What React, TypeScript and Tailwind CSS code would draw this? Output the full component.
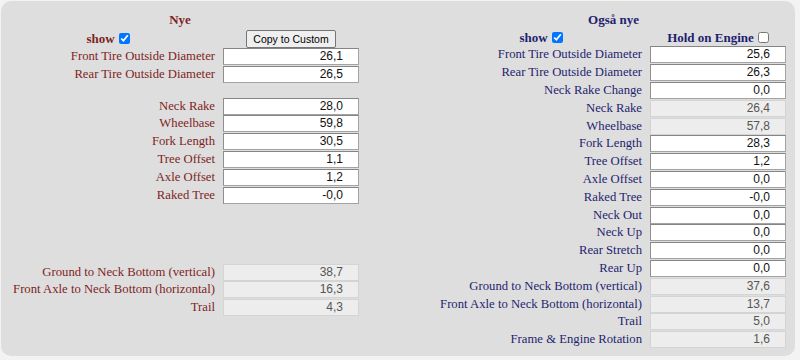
import React from "react";

type Row = { label: string; value: string; disabled?: boolean } | { gap: number };

const serif = { fontFamily: '"Liberation Serif", "Times New Roman", serif' };
const sans = { fontFamily: '"Liberation Sans", Arial, sans-serif' };

function Field({ value, disabled }: { value: string; disabled?: boolean }) {
  return (
    <div
      className={
        disabled
          ? "w-[136px] h-[17px] bg-[#ededed] border border-[#d4d4d4] text-[#555] text-[12px] leading-[15px] text-right pr-[15px]"
          : "w-[136px] h-[17px] bg-white border border-[#a3a3a3] border-t-[#858585] border-l-[#8f8f8f] text-[#111] text-[12px] leading-[15px] text-right pr-[15px]"
      }
      style={sans}
    >
      {value}
    </div>
  );
}

function Rows({ rows, labelW, color }: { rows: Row[]; labelW: string; color: string }) {
  return (
    <>
      {rows.map((r, i) =>
        "gap" in r ? (
          <div key={i} style={{ height: r.gap }} />
        ) : (
          <div key={i} className="flex items-center h-[17.8px] gap-[8px]">
            <div className={`${labelW} text-right text-[12.7px] leading-[15px] whitespace-nowrap ${color}`} style={serif}>
              {r.label}
            </div>
            <Field value={r.value} disabled={r.disabled} />
          </div>
        )
      )}
    </>
  );
}

function Check({ checked }: { checked?: boolean }) {
  return (
    <input
      type="checkbox"
      defaultChecked={checked}
      className="w-[11px] h-[11px] m-0 ml-[4px] align-middle"
    />
  );
}

export default function App() {
  const left: Row[] = [
    { label: "Front Tire Outside Diameter", value: "26,1" },
    { label: "Rear Tire Outside Diameter", value: "26,5" },
    { gap: 13.7 },
    { label: "Neck Rake", value: "28,0" },
    { label: "Wheelbase", value: "59,8" },
    { label: "Fork Length", value: "30,5" },
    { label: "Tree Offset", value: "1,1" },
    { label: "Axle Offset", value: "1,2" },
    { label: "Raked Tree", value: "-0,0" },
    { gap: 59.2 },
    { label: "Ground to Neck Bottom (vertical)", value: "38,7", disabled: true },
    { label: "Front Axle to Neck Bottom (horizontal)", value: "16,3", disabled: true },
    { label: "Trail", value: "4,3", disabled: true },
  ];
  const right: Row[] = [
    { label: "Front Tire Outside Diameter", value: "25,6" },
    { label: "Rear Tire Outside Diameter", value: "26,3" },
    { label: "Neck Rake Change", value: "0,0" },
    { label: "Neck Rake", value: "26,4", disabled: true },
    { label: "Wheelbase", value: "57,8", disabled: true },
    { label: "Fork Length", value: "28,3" },
    { label: "Tree Offset", value: "1,2" },
    { label: "Axle Offset", value: "0,0" },
    { label: "Raked Tree", value: "-0,0" },
    { label: "Neck Out", value: "0,0" },
    { label: "Neck Up", value: "0,0" },
    { label: "Rear Stretch", value: "0,0" },
    { label: "Rear Up", value: "0,0" },
    { label: "Ground to Neck Bottom (vertical)", value: "37,6", disabled: true },
    { label: "Front Axle to Neck Bottom (horizontal)", value: "13,7", disabled: true },
    { label: "Trail", value: "5,0", disabled: true },
    { label: "Frame & Engine Rotation", value: "1,6", disabled: true },
  ];
  const red = "text-[#7f1f1f]";
  const blue = "text-[#1e1e70]";
  return (
    <div className="w-[800px] h-[360px] bg-[#f3f3f3] pt-[1px] pl-[1px]">
      <div className="w-[794px] h-[355px] rounded-[10px] bg-[#dedede] flex pt-[10px]">
        {/* Left */}
        <div className="w-[399px] flex flex-col">
          <div className="flex h-[18px] items-center">
            <div className={`w-[358px] text-center font-bold text-[13px] ${red}`} style={serif}>
              Nye
            </div>
          </div>
          <div className="flex h-[19px] items-center gap-[8px]">
            <div className={`w-[214px] flex justify-center items-center font-bold text-[13px] ${red}`} style={serif}>
              show
              <Check checked />
            </div>
            <div className="w-[136px] flex justify-center">
              <button
                className="h-[18px] px-[6px] bg-[#efefef] border border-[#767676] rounded-[2px] text-[10.5px] leading-[14px] text-black"
                style={sans}
              >
                Copy to Custom
              </button>
            </div>
          </div>
          <Rows rows={left} labelW="w-[214px]" color={red} />
        </div>
        {/* Right */}
        <div className="w-[395px] flex flex-col">
          <div className="flex h-[18px] items-center">
            <div className={`w-[387px] pl-[40px] text-center font-bold text-[13px] ${blue}`} style={serif}>
              Også nye
            </div>
          </div>
          <div className="flex h-[17px] items-center gap-[8px]">
            <div className={`w-[242px] pl-[40px] flex justify-center items-center font-bold text-[13px] ${blue}`} style={serif}>
              show
              <Check checked />
            </div>
            <div className={`w-[136px] flex justify-center items-center font-bold text-[13px] ${blue}`} style={serif}>
              Hold on Engine
              <Check />
            </div>
          </div>
          <Rows rows={right} labelW="w-[242px]" color={blue} />
        </div>
      </div>
    </div>
  );
}
